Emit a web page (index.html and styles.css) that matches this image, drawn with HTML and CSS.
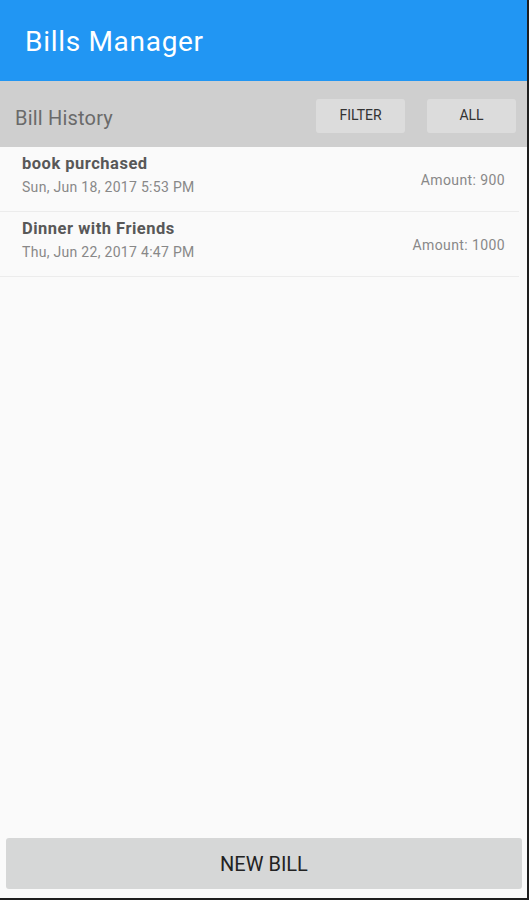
FILE: index.html
```html
<!DOCTYPE html>
<html lang="en">
<head>
    <meta charset="UTF-8">
    <meta name="viewport" content="width=device-width, initial-scale=1.0">
    <title>Bills Manager</title>
    <link rel="stylesheet" href="styles.css">
</head>
<body>
    <div class="app">
        <header class="appbar">
            <h1>Bills Manager</h1>
        </header>
        <div class="history-bar">
            <h2>Bill History</h2>
            <div class="actions">
                <button class="flat-btn">FILTER</button>
                <button class="flat-btn">ALL</button>
            </div>
        </div>
        <ul class="bills">
            <li class="bill">
                <div class="bill-info">
                    <div class="bill-title">book purchased</div>
                    <div class="bill-date">Sun, Jun 18, 2017 5:53 PM</div>
                </div>
                <div class="bill-amount">Amount: 900</div>
            </li>
            <li class="bill">
                <div class="bill-info">
                    <div class="bill-title">Dinner with Friends</div>
                    <div class="bill-date">Thu, Jun 22, 2017 4:47 PM</div>
                </div>
                <div class="bill-amount">Amount: 1000</div>
            </li>
        </ul>
        <div class="footer">
            <button class="new-bill">NEW BILL</button>
        </div>
    </div>
</body>
</html>
```

FILE: styles.css
```css
body {
    margin: 0;
    padding: 0;
    font-family: Roboto, "Noto Sans", sans-serif;
    background: #1e1e1e;
}

.app {
    display: flex;
    flex-direction: column;
    width: 527px;
    height: 898px;
    background: #fafafa;
}

.appbar {
    background: #2196f3;
    height: 81px;
    display: flex;
    align-items: center;
    padding: 0 25px;
    box-sizing: border-box;
}

.appbar h1 {
    margin: 2px 0 0;
    font-size: 28px;
    font-weight: 400;
    letter-spacing: 0.7px;
    color: #ffffff;
}

.history-bar {
    background: #cfcfcf;
    height: 66px;
    display: flex;
    align-items: center;
    justify-content: space-between;
    padding: 0 11px 0 15px;
}

.history-bar h2 {
    margin: 8px 0 0;
    font-size: 20px;
    font-weight: 400;
    letter-spacing: 0.2px;
    color: #6a6a6a;
}

.actions {
    display: flex;
    gap: 22px;
    margin-top: 3px;
}

.flat-btn {
    width: 89px;
    height: 34px;
    border: none;
    border-radius: 3px;
    background: #dcdcdc;
    color: #333333;
    font-family: Roboto, sans-serif;
    font-size: 14px;
    padding: 0 0 2px;
}

.bills {
    list-style: none;
    margin: 0;
    padding: 0;
    flex: 1;
}

.bill {
    display: flex;
    align-items: center;
    justify-content: space-between;
    height: 64px;
    padding: 0 14px 0 22px;
    border-bottom: 1px solid #ececec;
    margin-right: 8px;
}

.bill-info {
    margin-top: -4px;
}

.bill-title {
    font-size: 16.5px;
    font-weight: 700;
    letter-spacing: 0.5px;
    color: #585858;
    line-height: 20px;
}

.bill-date {
    font-size: 14px;
    letter-spacing: 0.3px;
    color: #888888;
    line-height: 26px;
}

.bill-amount {
    font-size: 14px;
    letter-spacing: 0.4px;
    color: #888888;
    margin-top: 2px;
}

.footer {
    padding: 0 5px 9px 6px;
}

.new-bill {
    width: 100%;
    height: 51px;
    border: none;
    border-radius: 3px;
    background: #d6d7d7;
    color: #222222;
    font-family: Roboto, sans-serif;
    font-size: 20px;
    padding: 0;
}
```
